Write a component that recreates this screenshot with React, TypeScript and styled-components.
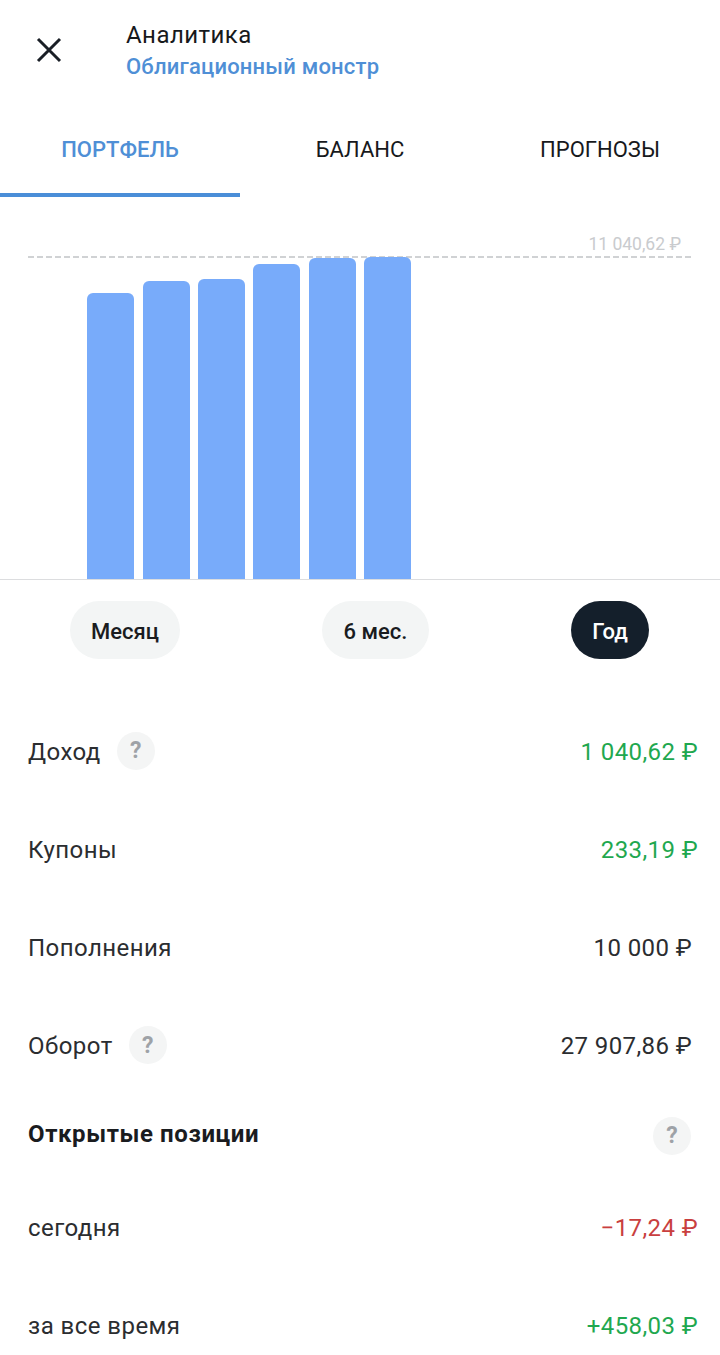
import styled, { createGlobalStyle } from "styled-components";

const GlobalStyle = createGlobalStyle`
  html, body {
    margin: 0;
    padding: 0;
    background: #fff;
  }
  body {
    font-family: Roboto, "Liberation Sans", sans-serif;
    color: #1d1f22;
  }
`;

const Page = styled.div`
  width: 720px;
  height: 1355px;
  overflow: hidden;
  background: #fff;
`;

const Header = styled.header`
  display: flex;
  align-items: center;
  height: 100px;
  padding-left: 36px;
  box-sizing: border-box;
`;

const CloseButton = styled.div`
  display: flex;
  width: 90px;
  color: #1a1f26;
`;

const Titles = styled.div`
  display: flex;
  flex-direction: column;
  gap: 2px;
  margin-top: 2px;
`;

const Title = styled.div`
  font-size: 24px;
  line-height: 30px;
  letter-spacing: 0.45px;
  color: #17191c;
`;

const Subtitle = styled.div`
  font-size: 22px;
  line-height: 30px;
  letter-spacing: 0.2px;
  font-weight: 500;
  color: #4f8fd6;
`;

const Tabs = styled.nav`
  display: grid;
  grid-template-columns: repeat(3, 240px);
`;

const Tab = styled.div<{ $active?: boolean }>`
  height: 97px;
  box-sizing: border-box;
  padding-top: 35px;
  text-align: center;
  font-size: 22px;
  line-height: 30px;
  font-weight: ${({ $active }) => ($active ? 500 : 400)};
  color: ${({ $active }) => ($active ? "#4f8fd6" : "#17191c")};
  border-bottom: 4px solid ${({ $active }) => ($active ? "#4a8ed8" : "transparent")};
`;

const Chart = styled.section`
  padding-top: 35px;
  border-bottom: 1px solid #dcdddf;
`;

const LimitLabel = styled.div`
  padding-right: 39px;
  text-align: right;
  font-size: 17.5px;
  line-height: 24px;
  color: #c9cbce;
`;

const LimitLine = styled.div`
  margin: 0 28px;
  height: 2px;
  background: repeating-linear-gradient(to right, #d0d2d4 0 6px, transparent 6px 9px);
`;

const Bars = styled.div`
  display: flex;
  align-items: flex-end;
  gap: 8.4px;
  height: 322px;
  margin-top: -1px;
  padding-left: 87.2px;
`;

const Bar = styled.div`
  width: 47px;
  border-radius: 6px 6px 0 0;
  background: #78abfa;
`;

const Periods = styled.div`
  display: flex;
  height: 58px;
  margin-top: 21px;
`;

const PeriodSlot = styled.div<{ $left: number }>`
  margin-left: ${({ $left }) => $left}px;
`;

const Period = styled.div<{ $active?: boolean; $width: number }>`
  display: flex;
  align-items: center;
  justify-content: center;
  box-sizing: border-box;
  width: ${({ $width }) => $width}px;
  height: 58px;
  padding-top: 2px;
  border-radius: 29px;
  font-size: 22px;
  font-weight: 500;
  background: ${({ $active }) => ($active ? "#141f2b" : "#f3f5f5")};
  color: ${({ $active }) => ($active ? "#ffffff" : "#1a1c1f")};
`;

const Rows = styled.section`
  margin-top: 44px;
`;

const Row = styled.div<{ $inset?: number }>`
  display: flex;
  align-items: center;
  justify-content: space-between;
  height: 98px;
  padding: 0 ${({ $inset }) => $inset ?? 22}px 0 28px;
`;

const SectionRow = styled(Row)`
  height: 78px;
  margin-bottom: 6px;
`;

const Label = styled.div`
  display: flex;
  align-items: center;
  font-size: 24px;
  letter-spacing: 0.45px;
  color: #2b2d30;
`;

const SectionLabel = styled.div`
  font-size: 24px;
  font-weight: 700;
  letter-spacing: 0.6px;
  color: #1a1c1f;
`;

const Help = styled.span<{ $gap?: number; $shift?: number }>`
  display: inline-flex;
  align-items: center;
  justify-content: center;
  flex: none;
  width: 38px;
  height: 38px;
  margin-left: ${({ $gap }) => $gap ?? 0}px;
  margin-top: ${({ $shift }) => $shift ?? 0}px;
  border-radius: 50%;
  background: #f4f5f5;
  font-size: 23px;
  font-weight: 700;
  letter-spacing: 0;
  color: #9ea2a7;
`;

const Value = styled.div<{ $tone?: "up" | "down" }>`
  font-size: 24px;
  letter-spacing: 0.4px;
  color: ${({ $tone }) =>
    $tone === "up" ? "#1fa84f" : $tone === "down" ? "#c93f3f" : "#2b2d30"};
`;

const BAR_HEIGHTS = [286, 298, 300, 315, 321, 322];

const PERIODS = [
  { name: "Месяц", left: 70, width: 110 },
  { name: "6 мес.", left: 142, width: 107 },
  { name: "Год", left: 142, width: 78, active: true },
];

export default function App() {
  return (
    <Page>
      <GlobalStyle />
      <Header>
        <CloseButton>
          <svg width="26" height="26" viewBox="0 0 26 26" fill="none">
            <path d="M2 2 L24 24 M24 2 L2 24" stroke="currentColor" strokeWidth="3" />
          </svg>
        </CloseButton>
        <Titles>
          <Title>Аналитика</Title>
          <Subtitle>Облигационный монстр</Subtitle>
        </Titles>
      </Header>
      <Tabs>
        <Tab $active>ПОРТФЕЛЬ</Tab>
        <Tab>БАЛАНС</Tab>
        <Tab>ПРОГНОЗЫ</Tab>
      </Tabs>
      <Chart>
        <LimitLabel>11 040,62 ₽</LimitLabel>
        <LimitLine />
        <Bars>
          {BAR_HEIGHTS.map((h, i) => (
            <Bar key={i} style={{ height: h }} />
          ))}
        </Bars>
      </Chart>
      <Periods>
        {PERIODS.map((p) => (
          <PeriodSlot key={p.name} $left={p.left}>
            <Period $width={p.width} $active={p.active}>
              {p.name}
            </Period>
          </PeriodSlot>
        ))}
      </Periods>
      <Rows>
        <Row>
          <Label>
            Доход<Help $gap={16} $shift={-3}>?</Help>
          </Label>
          <Value $tone="up">1 040,62 ₽</Value>
        </Row>
        <Row>
          <Label>Купоны</Label>
          <Value $tone="up">233,19 ₽</Value>
        </Row>
        <Row $inset={28}>
          <Label>Пополнения</Label>
          <Value>10 000 ₽</Value>
        </Row>
        <Row $inset={28}>
          <Label>
            Оборот<Help $gap={16} $shift={-2}>?</Help>
          </Label>
          <Value>27 907,86 ₽</Value>
        </Row>
        <SectionRow $inset={29}>
          <SectionLabel>Открытые позиции</SectionLabel>
          <Help $shift={3}>?</Help>
        </SectionRow>
        <Row>
          <Label>сегодня</Label>
          <Value $tone="down">−17,24 ₽</Value>
        </Row>
        <Row>
          <Label>за все время</Label>
          <Value $tone="up">+458,03 ₽</Value>
        </Row>
      </Rows>
    </Page>
  );
}
